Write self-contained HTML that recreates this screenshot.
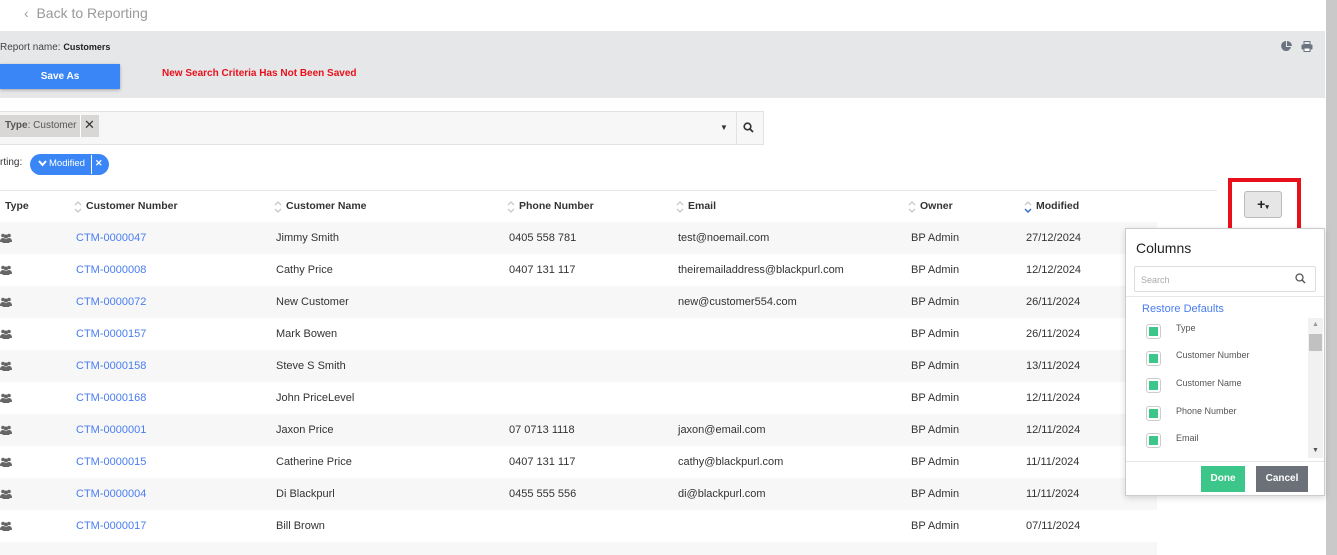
<!DOCTYPE html>
<html><head><style>
*{box-sizing:border-box;margin:0;padding:0}
html,body{width:1337px;height:555px;overflow:hidden}
body{background:#fff;font-family:"Liberation Sans",sans-serif;position:relative;color:#333}
.a{position:absolute}
.row{position:absolute;left:0;width:1157px;height:32px;font-size:11px;color:#333}
.row span{position:absolute;top:10px}
.row svg{position:absolute;left:0;top:11px}
.row.s{background:#f7f7f7}
.lnk{color:#4a7df0}
.th{position:absolute;top:200px;font-size:10.5px;font-weight:bold;color:#333}
.ar{position:absolute;top:201px}
.cb{position:absolute;left:1146px;width:15px;height:15px;border:1px solid #ccc;border-radius:3px;background:#fff}
.cb i{position:absolute;left:2px;top:2px;width:9px;height:9px;background:#3cc68a}
.cl{position:absolute;left:1176px;font-size:9px;color:#555}
</style></head><body>
<svg width="0" height="0" style="position:absolute"><defs>
<symbol id="pp" viewBox="0 0 12 10"><circle cx="3" cy="2.5" r="1.8" fill="#666"/><circle cx="9" cy="2.5" r="1.8" fill="#666"/><circle cx="6" cy="3.5" r="2" fill="#666"/><path d="M0 9 Q0 5 3 5 Q6 5 6 9Z M6 9 Q6 5 9 5 Q12 5 12 9Z M2.5 10 Q2.5 6 6 6 Q9.5 6 9.5 10Z" fill="#666"/></symbol>
<symbol id="ud" viewBox="0 0 8 12"><path d="M1 4 L4 1 L7 4 M1 8 L4 11 L7 8" fill="none" stroke="#c4c8cf" stroke-width="1.3"/></symbol>
</defs></svg>
<div class="a" style="left:24px;top:5px;font-size:14px;color:#999">&lsaquo;&nbsp; Back to Reporting</div>
<div class="a" style="left:0;top:31px;width:1325px;height:67px;background:#e6e7e9"></div>
<div class="a" style="left:0;top:42px;font-size:10px;color:#444">Report name: <b style="font-size:9px;color:#222">Customers</b></div>
<div class="a" style="left:0;top:64px;width:120px;height:25px;background:#3a86f7;color:#fff;font-size:10px;font-weight:bold;text-align:center;line-height:25px;box-shadow:0 1px 3px rgba(0,0,0,.3)">Save As</div>
<div class="a" style="left:162px;top:68px;font-size:10px;font-weight:bold;color:#e8101a">New Search Criteria Has Not Been Saved</div>
<svg class="a" style="left:1281px;top:41px" width="11" height="11" viewBox="0 0 11 11"><path d="M5 0 A5 5 0 1 0 10 6 L5 6Z" fill="#6b7280"/><path d="M6 0 A5 5 0 0 1 11 5 L6 5Z" fill="#6b7280"/></svg>
<svg class="a" style="left:1301px;top:41px" width="12" height="11" viewBox="0 0 12 11"><rect x="3" y="0.5" width="6" height="3" fill="none" stroke="#6b7280"/><rect x="0.5" y="3.5" width="11" height="5" rx="1" fill="#6b7280"/><rect x="3" y="7" width="6" height="3.5" fill="#fff" stroke="#6b7280"/></svg>
<div class="a" style="left:1326px;top:0;width:11px;height:555px;background:#c9c9c9"></div>
<div class="a" style="left:0;top:111px;width:764px;height:34px;background:#f7f7f7;border:1px solid #e2e2e2;border-left:none"></div>
<div class="a" style="left:0;top:115px;width:99px;height:22px;background:#d9d7d6;font-size:10px;color:#555;line-height:22px;padding-left:5px"><b>Type</b>: Customer</div>
<div class="a" style="left:80px;top:115px;width:1px;height:22px;background:#fff"></div>
<div class="a" style="left:84px;top:117px;font-size:13px;color:#333">✕</div>
<div class="a" style="left:720px;top:123px;font-size:8px;color:#333">▼</div>
<div class="a" style="left:736px;top:112px;width:1px;height:32px;background:#e2e2e2"></div>
<svg class="a" style="left:743px;top:122px" width="11" height="11" viewBox="0 0 11 11"><circle cx="4.5" cy="4.5" r="3.3" fill="none" stroke="#333" stroke-width="1.6"/><path d="M7 7 L10 10" stroke="#333" stroke-width="1.8"/></svg>
<div class="a" style="left:0;top:157px;font-size:10px;color:#333">rting:</div>
<div class="a" style="left:30px;top:154px;width:79px;height:21px;background:#3a86f7;border-radius:11px;color:#fff;font-size:9.5px;line-height:19px;padding-left:19px">Modified</div>
<svg class="a" style="left:38px;top:160px" width="9" height="7" viewBox="0 0 9 7"><path d="M1 1 L4.5 5 L8 1" fill="none" stroke="#fff" stroke-width="2"/></svg>
<div class="a" style="left:91px;top:155px;width:1px;height:19px;background:#fff"></div>
<div class="a" style="left:95px;top:158px;font-size:9px;color:#fff;font-weight:bold">✕</div>
<div class="a" style="left:0;top:190px;width:1217px;height:1px;background:#e6e6e6"></div>
<div class="th" style="left:5px">Type</div>
<svg class="ar" style="left:74px" width="8" height="12"><use href="#ud"/></svg><div class="th" style="left:86px">Customer Number</div>
<svg class="ar" style="left:274px" width="8" height="12"><use href="#ud"/></svg><div class="th" style="left:286px">Customer Name</div>
<svg class="ar" style="left:507px" width="8" height="12"><use href="#ud"/></svg><div class="th" style="left:519px">Phone Number</div>
<svg class="ar" style="left:676px" width="8" height="12"><use href="#ud"/></svg><div class="th" style="left:688px">Email</div>
<svg class="ar" style="left:908px" width="8" height="12"><use href="#ud"/></svg><div class="th" style="left:920px">Owner</div>
<svg class="ar" style="left:1024px" width="8" height="12" viewBox="0 0 8 12"><path d="M1 4 L4 1 L7 4" fill="none" stroke="#c4c8cf" stroke-width="1.3"/><path d="M1 8 L4 11 L7 8" fill="none" stroke="#3a6fd0" stroke-width="1.5"/></svg><div class="th" style="left:1036px">Modified</div>

<div class="row s" style="top:222px"><svg width="12" height="10"><use href="#pp"/></svg><span class="lnk" style="left:76px">CTM-0000047</span><span style="left:276px">Jimmy Smith</span><span style="left:509px">0405 558 781</span><span style="left:678px">test@noemail.com</span><span style="left:911px">BP Admin</span><span style="left:1026px">27/12/2024</span></div>
<div class="row" style="top:254px"><svg width="12" height="10"><use href="#pp"/></svg><span class="lnk" style="left:76px">CTM-0000008</span><span style="left:276px">Cathy Price</span><span style="left:509px">0407 131 117</span><span style="left:678px">theiremailaddress@blackpurl.com</span><span style="left:911px">BP Admin</span><span style="left:1026px">12/12/2024</span></div>
<div class="row s" style="top:286px"><svg width="12" height="10"><use href="#pp"/></svg><span class="lnk" style="left:76px">CTM-0000072</span><span style="left:276px">New Customer</span><span style="left:678px">new@customer554.com</span><span style="left:911px">BP Admin</span><span style="left:1026px">26/11/2024</span></div>
<div class="row" style="top:318px"><svg width="12" height="10"><use href="#pp"/></svg><span class="lnk" style="left:76px">CTM-0000157</span><span style="left:276px">Mark Bowen</span><span style="left:911px">BP Admin</span><span style="left:1026px">26/11/2024</span></div>
<div class="row s" style="top:350px"><svg width="12" height="10"><use href="#pp"/></svg><span class="lnk" style="left:76px">CTM-0000158</span><span style="left:276px">Steve S Smith</span><span style="left:911px">BP Admin</span><span style="left:1026px">13/11/2024</span></div>
<div class="row" style="top:382px"><svg width="12" height="10"><use href="#pp"/></svg><span class="lnk" style="left:76px">CTM-0000168</span><span style="left:276px">John PriceLevel</span><span style="left:911px">BP Admin</span><span style="left:1026px">12/11/2024</span></div>
<div class="row s" style="top:414px"><svg width="12" height="10"><use href="#pp"/></svg><span class="lnk" style="left:76px">CTM-0000001</span><span style="left:276px">Jaxon Price</span><span style="left:509px">07 0713 1118</span><span style="left:678px">jaxon@email.com</span><span style="left:911px">BP Admin</span><span style="left:1026px">12/11/2024</span></div>
<div class="row" style="top:446px"><svg width="12" height="10"><use href="#pp"/></svg><span class="lnk" style="left:76px">CTM-0000015</span><span style="left:276px">Catherine Price</span><span style="left:509px">0407 131 117</span><span style="left:678px">cathy@blackpurl.com</span><span style="left:911px">BP Admin</span><span style="left:1026px">11/11/2024</span></div>
<div class="row s" style="top:478px"><svg width="12" height="10"><use href="#pp"/></svg><span class="lnk" style="left:76px">CTM-0000004</span><span style="left:276px">Di Blackpurl</span><span style="left:509px">0455 555 556</span><span style="left:678px">di@blackpurl.com</span><span style="left:911px">BP Admin</span><span style="left:1026px">11/11/2024</span></div>
<div class="row" style="top:510px"><svg width="12" height="10"><use href="#pp"/></svg><span class="lnk" style="left:76px">CTM-0000017</span><span style="left:276px">Bill Brown</span><span style="left:911px">BP Admin</span><span style="left:1026px">07/11/2024</span></div>
<div class="row s" style="top:542px;height:13px"></div>

<div class="a" style="left:1228px;top:178px;width:73px;height:55px;border:4px solid #e8101a"></div>
<div class="a" style="left:1244px;top:191px;width:38px;height:27px;background:#e6e6e6;border:1px solid #bbb;border-radius:3px;font-size:14px;font-weight:bold;text-align:center;line-height:24px;color:#222">+<span style="font-size:7px">▾</span></div>
<div class="a" style="left:1125px;top:228px;width:200px;height:268px;background:#fff;border:1px solid #ccc;box-shadow:0 2px 6px rgba(0,0,0,.15)"></div>
<div class="a" style="left:1136px;top:240px;font-size:14px;color:#222">Columns</div>
<div class="a" style="left:1134px;top:266px;width:182px;height:26px;border:1px solid #ddd;border-radius:2px;font-size:9px;color:#aaa;line-height:26px;padding-left:6px">Search</div>
<svg class="a" style="left:1295px;top:273px" width="11" height="11" viewBox="0 0 11 11"><circle cx="4.5" cy="4.5" r="3.5" fill="none" stroke="#555" stroke-width="1.3"/><path d="M7 7 L10 10" stroke="#555" stroke-width="1.5"/></svg>
<div class="a" style="left:1126px;top:296px;width:198px;height:1px;background:#e6e6e6"></div>
<div class="a" style="left:1142px;top:303px;font-size:11px;color:#4a7df0">Restore Defaults</div>
<div class="cb" style="top:324px"><i></i></div><div class="cl" style="top:323px">Type</div>
<div class="cb" style="top:351px"><i></i></div><div class="cl" style="top:350px">Customer Number</div>
<div class="cb" style="top:378px"><i></i></div><div class="cl" style="top:378px">Customer Name</div>
<div class="cb" style="top:406px"><i></i></div><div class="cl" style="top:406px">Phone Number</div>
<div class="cb" style="top:433px"><i></i></div><div class="cl" style="top:433px">Email</div>
<div class="a" style="left:1308px;top:318px;width:15px;height:140px;background:#f1f1f1"></div>
<div class="a" style="left:1312px;top:321px;font-size:7px;color:#999">▲</div>
<div class="a" style="left:1312px;top:447px;font-size:7px;color:#555">▼</div>
<div class="a" style="left:1309px;top:334px;width:13px;height:17px;background:#c1c1c1"></div>
<div class="a" style="left:1126px;top:461px;width:198px;height:1px;background:#e6e6e6"></div>
<div class="a" style="left:1201px;top:466px;width:44px;height:26px;background:#3cc68a;color:#fff;font-size:10px;font-weight:bold;text-align:center;line-height:26px">Done</div>
<div class="a" style="left:1256px;top:466px;width:52px;height:26px;background:#6b7079;color:#fff;font-size:10px;font-weight:bold;text-align:center;line-height:26px">Cancel</div>
</body></html>
